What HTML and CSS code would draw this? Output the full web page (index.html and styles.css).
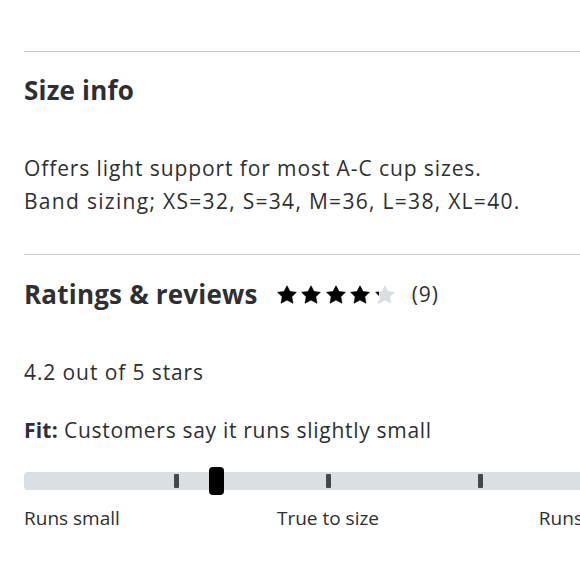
FILE: index.html
```html
<!DOCTYPE html>
<html lang="en">
<head>
    <meta charset="UTF-8">
    <meta name="viewport" content="width=device-width, initial-scale=1.0">
    <title>Size info and reviews</title>
    <link rel="stylesheet" href="styles.css">
</head>
<body>
    <svg width="0" height="0" class="defs">
        <defs>
            <linearGradient id="part-fill">
                <stop offset="20%" stop-color="#000"></stop>
                <stop offset="20%" stop-color="#dadee3"></stop>
            </linearGradient>
        </defs>
    </svg>
    <div class="page">
        <section class="block">
            <h2 class="title">Size info</h2>
            <p class="size-text">Offers light support for most A-C cup sizes.<br><span class="sizes">Band sizing; XS=32, S=34, M=36, L=38, XL=40.</span></p>
        </section>

        <section class="block">
            <div class="rating-head">
                <h2 class="title">Ratings &amp; reviews</h2>
                <div class="stars">
                    <svg class="star" viewBox="0 0 20 19"><polygon points="10,0.8 13,6.5 19.4,7.3 14.8,11.7 16,18.3 10,15.1 4,18.3 5.2,11.7 0.6,7.3 7,6.5"/></svg>
                    <svg class="star" viewBox="0 0 20 19"><polygon points="10,0.8 13,6.5 19.4,7.3 14.8,11.7 16,18.3 10,15.1 4,18.3 5.2,11.7 0.6,7.3 7,6.5"/></svg>
                    <svg class="star" viewBox="0 0 20 19"><polygon points="10,0.8 13,6.5 19.4,7.3 14.8,11.7 16,18.3 10,15.1 4,18.3 5.2,11.7 0.6,7.3 7,6.5"/></svg>
                    <svg class="star" viewBox="0 0 20 19"><polygon points="10,0.8 13,6.5 19.4,7.3 14.8,11.7 16,18.3 10,15.1 4,18.3 5.2,11.7 0.6,7.3 7,6.5"/></svg>
                    <svg class="star part" viewBox="0 0 20 19"><polygon points="10,0.8 13,6.5 19.4,7.3 14.8,11.7 16,18.3 10,15.1 4,18.3 5.2,11.7 0.6,7.3 7,6.5"/></svg>
                </div>
                <span class="count">(9)</span>
            </div>

            <p class="avg">4.2 out of 5 stars</p>
            <p class="fit"><strong>Fit:</strong> Customers say it runs slightly small</p>

            <div class="fit-scale">
                <div class="track">
                    <span class="tick" style="left: 25%"></span>
                    <span class="tick" style="left: 50%"></span>
                    <span class="tick" style="left: 75%"></span>
                    <span class="thumb" style="left: 31.6%"></span>
                </div>
                <div class="scale-labels">
                    <span>Runs small</span>
                    <span>True to size</span>
                    <span class="end">Runs large</span>
                </div>
            </div>
        </section>
    </div>
</body>
</html>
```

FILE: styles.css
```css
body { margin: 0; font-family: "Open Sans", Lato, sans-serif; color: #2e2f32; background: #fff; overflow: hidden; }
.defs { position: absolute; }
.page { padding: 51px 0 0 24px; width: 700px; }
.block { border-top: 1px solid #c9cbce; padding-top: 21px; }
.block:first-child { padding-bottom: 36px; }
.title { margin: 0; font-size: 26px; line-height: 34px; font-weight: 700; color: #2e2f32; letter-spacing: 0.2px; }
.size-text, .avg, .fit, .count { font-size: 21px; letter-spacing: 0.9px; }
.size-text { margin: 45px 0 0; line-height: 33px; }
.sizes { letter-spacing: 1.3px; }

.rating-head { display: flex; align-items: center; margin-top: 1px; }
.stars { display: flex; gap: 4.5px; margin-left: 19px; }
.star { width: 20px; height: 19px; fill: #000; stroke: #000; stroke-width: 0.6; stroke-linejoin: round; }
.star.part { fill: url(#part-fill); stroke: url(#part-fill); }
.count { margin-left: 17px; }

.avg { margin: 45px 0 0; line-height: 33px; }
.fit { margin: 25px 0 0; line-height: 33px; letter-spacing: 0.7px; }
.fit strong { font-weight: 700; letter-spacing: 0.2px; }

.fit-scale { width: 608px; margin-top: 25px; }
.track { position: relative; height: 18px; background: #dadfe3; border-radius: 4px; }
.tick { position: absolute; top: 2px; width: 5px; height: 14px; margin-left: -2px; background: #46474a; border-radius: 1px; }
.thumb { position: absolute; top: -5px; width: 15px; height: 28px; margin-left: -7px; background: #000; border-radius: 4px; }
.scale-labels { display: grid; grid-template-columns: 1fr auto 1fr; margin-top: 12px; font-size: 19px; line-height: 33px; }
.scale-labels .end { text-align: right; }
```
